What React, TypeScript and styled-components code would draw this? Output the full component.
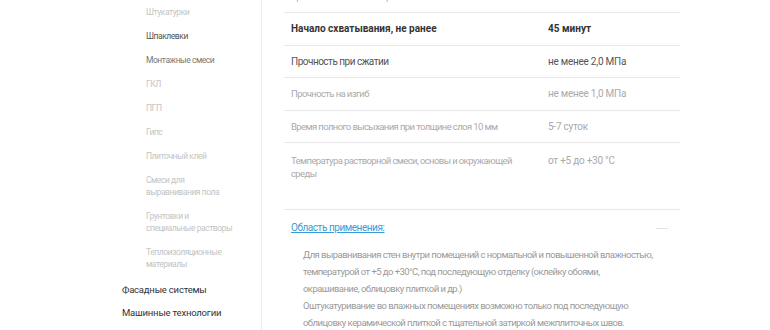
import React from "react";
import styled, { createGlobalStyle } from "styled-components";

const GlobalStyle = createGlobalStyle`
  html, body {
    margin: 0;
    padding: 0;
    background: #fff;
    overflow: hidden;
  }
  body {
    font-family: Roboto, "Liberation Sans", sans-serif;
  }
`;

type Tone = "strong" | "normal" | "muted";
type NavTone = "active" | "normal" | "muted";

const subItems: { title: string; tone: NavTone }[] = [
  { title: "Штукатурки", tone: "muted" },
  { title: "Шпаклевки", tone: "active" },
  { title: "Монтажные смеси", tone: "normal" },
  { title: "ГКЛ", tone: "muted" },
  { title: "ПГП", tone: "muted" },
  { title: "Гипс", tone: "muted" },
  { title: "Плиточный клей", tone: "muted" },
  { title: "Смеси для\nвыравнивания пола", tone: "muted" },
  { title: "Грунтовки и\nспециальные растворы", tone: "muted" },
  { title: "Теплоизоляционные\nматериалы", tone: "muted" },
];

const mainItems = ["Фасадные системы", "Машинные технологии"];

const specs: { name: string; value: string; tone: Tone }[] = [
  { name: "Время использования приготовленной смеси", value: "3 часа", tone: "muted" },
  { name: "Начало схватывания, не ранее", value: "45 минут", tone: "strong" },
  { name: "Прочность при сжатии", value: "не менее 2,0 МПа", tone: "normal" },
  { name: "Прочность на изгиб", value: "не менее 1,0 МПа", tone: "muted" },
  { name: "Время полного высыхания при толщине слоя 10 мм", value: "5-7 суток", tone: "muted" },
  {
    name: "Температура растворной смеси, основы и окружающей\nсреды",
    value: "от +5 до +30 °С",
    tone: "muted",
  },
];

const usage = [
  "Для выравнивания стен внутри помещений с нормальной и повышенной влажностью,",
  "температурой от +5 до +30°С, под последующую отделку (оклейку обоями,",
  "окрашивание, облицовку плиткой и др.)",
  "Оштукатуривание во влажных помещениях возможно только под последующую",
  "облицовку керамической плиткой с тщательной затиркой межплиточных швов.",
];

const Page = styled.div`
  display: flex;
  width: 770px;
  height: 330px;
  overflow: hidden;
`;

const Sidebar = styled.nav`
  width: 262px;
  flex-shrink: 0;
  border-right: 1px solid #ececec;
  padding-left: 122px;
  box-sizing: border-box;
`;

const SubList = styled.ul`
  list-style: none;
  margin: 0;
  padding: 0 0 0 24px;
`;

const subColors = { active: "#555", normal: "#777", muted: "#c4c4c4" };

const SubItem = styled.li<{ $tone: NavTone }>`
  padding: 6px 0;
  font-size: 8.5px;
  letter-spacing: -0.45px;
  line-height: 12px;
  white-space: pre-line;
  color: ${(p) => subColors[p.$tone]};
`;

const MainItem = styled.div`
  font-size: 9.5px;
  letter-spacing: -0.2px;
  line-height: 13px;
  padding: 5px 0;
  color: #333;
  &:first-of-type {
    margin-top: 2px;
  }
`;

const Content = styled.main`
  flex: 1;
  padding: 0 90px 0 22px;
  margin-top: -20.5px;
`;

const Specs = styled.div`
  display: grid;
  grid-template-columns: 257px 1fr;
`;

const specColors = { strong: "#333", normal: "#555", muted: "#aaa" };

const Cell = styled.div<{ $tone: Tone; $tall?: boolean }>`
  border-top: 1px solid #e8e8e8;
  padding: ${(p) => (p.$tall ? "11px" : "0")} 7px 0;
  height: ${(p) => (p.$tall ? "67px" : "32.5px")};
  box-sizing: border-box;
  display: flex;
  align-items: ${(p) => (p.$tall ? "flex-start" : "center")};
  line-height: 13px;
  white-space: pre-line;
  color: ${(p) => specColors[p.$tone]};
  font-weight: ${(p) => (p.$tone === "strong" ? 700 : 400)};
`;

const labelSizes = {
  strong: "font-size: 10px; letter-spacing: 0;",
  normal: "font-size: 10px; letter-spacing: -0.5px;",
  muted: "font-size: 9.5px; letter-spacing: -0.6px;",
};

const Label = styled(Cell)`
  ${(p) => labelSizes[p.$tone]}
`;

const Value = styled(Cell)`
  font-size: 10px;
  letter-spacing: ${(p) => (p.$tone === "strong" ? "0" : "-0.25px")};
`;

const SpecsEnd = styled.div`
  grid-column: 1 / -1;
  border-top: 1px solid #e8e8e8;
`;

const UsageHead = styled.div`
  display: flex;
  justify-content: space-between;
  align-items: center;
  padding: 0 0 0 7px;
  margin-top: 10px;
  height: 16px;
`;

const UsageLink = styled.a`
  font-size: 10px;
  letter-spacing: -0.45px;
  line-height: 14px;
  color: #3d9bd8;
  text-decoration: underline;
  cursor: pointer;
`;

const Toggle = styled.span`
  width: 36px;
  height: 16px;
  display: flex;
  align-items: center;
  justify-content: center;
  &::before {
    content: "";
    width: 12px;
    height: 1px;
    background: #e2e2e2;
  }
`;

const UsageText = styled.div`
  padding: 10px 0 0 19px;
  font-size: 9.5px;
  letter-spacing: -0.55px;
  line-height: 17px;
  color: #9a9a9a;
  white-space: nowrap;
`;

export default function App() {
  return (
    <>
      <GlobalStyle />
      <Page>
        <Sidebar>
          <SubList>
            {subItems.map((item) => (
              <SubItem key={item.title} $tone={item.tone}>
                {item.title}
              </SubItem>
            ))}
          </SubList>
          {mainItems.map((title) => (
            <MainItem key={title}>{title}</MainItem>
          ))}
        </Sidebar>
        <Content>
          <Specs>
            {specs.map((row, i) => {
              const tall = i === specs.length - 1;
              return (
                <React.Fragment key={row.name}>
                  <Label $tone={row.tone} $tall={tall}>
                    {row.name}
                  </Label>
                  <Value $tone={row.tone} $tall={tall}>
                    {row.value}
                  </Value>
                </React.Fragment>
              );
            })}
            <SpecsEnd />
          </Specs>
          <UsageHead>
            <UsageLink>Область применения:</UsageLink>
            <Toggle />
          </UsageHead>
          <UsageText>
            {usage.map((line) => (
              <div key={line}>{line}</div>
            ))}
          </UsageText>
        </Content>
      </Page>
    </>
  );
}
